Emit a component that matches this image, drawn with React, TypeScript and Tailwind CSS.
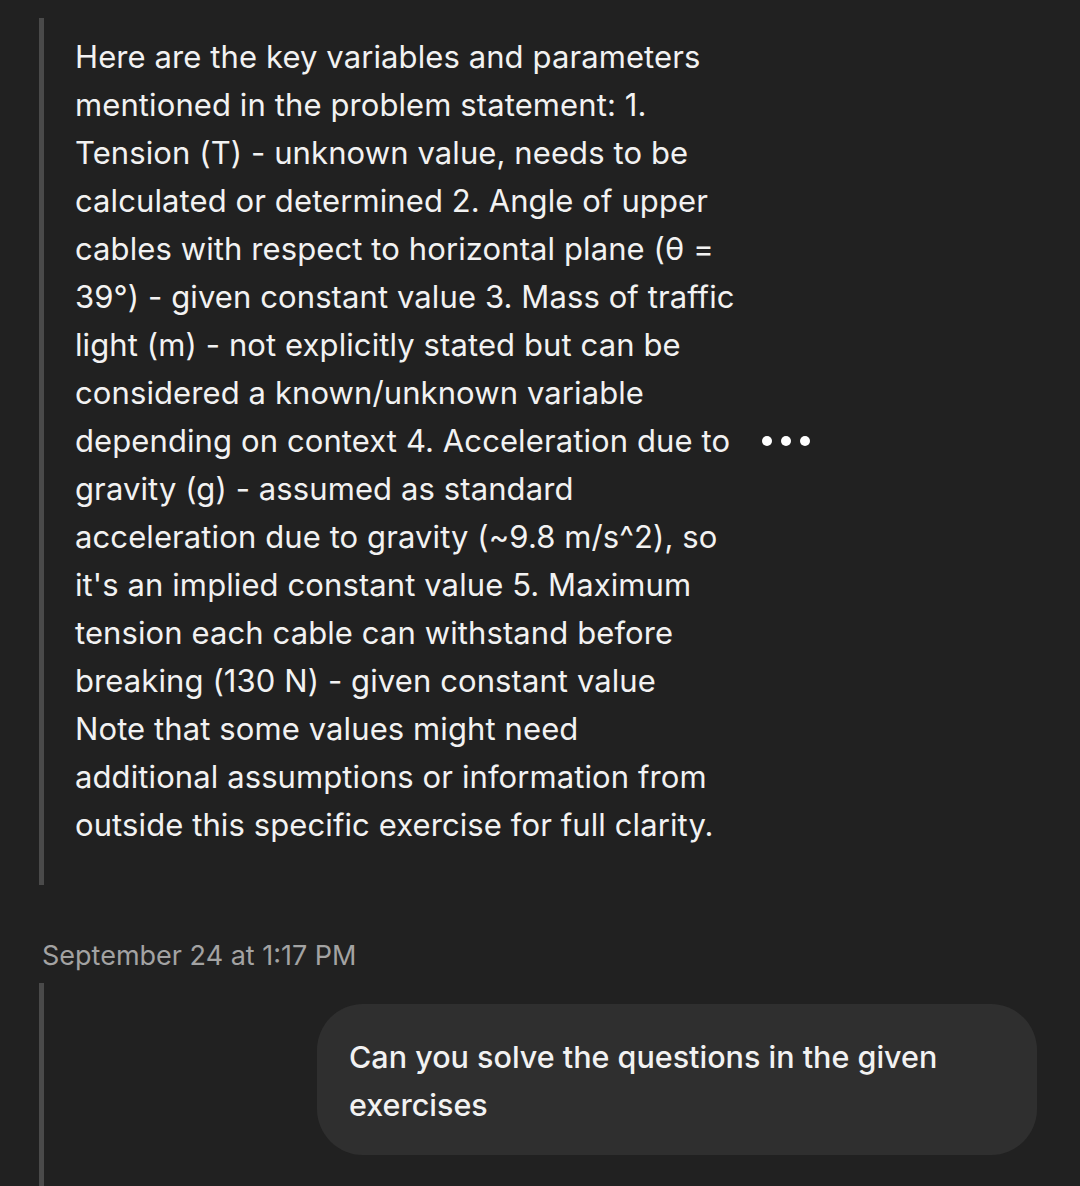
import { ReactNode } from 'react';

const lines = [
  'Here are the key variables and parameters',
  'mentioned in the problem statement: 1.',
  'Tension (T) - unknown value, needs to be',
  'calculated or determined 2. Angle of upper',
  'cables with respect to horizontal plane (θ =',
  '39°) - given constant value 3. Mass of traffic',
  'light (m) - not explicitly stated but can be',
  'considered a known/unknown variable',
  'depending on context 4. Acceleration due to',
  'gravity (g) - assumed as standard',
  'acceleration due to gravity (~9.8 m/s^2), so',
  "it's an implied constant value 5. Maximum",
  'tension each cable can withstand before',
  'breaking (130 N) - given constant value',
  'Note that some values might need',
  'additional assumptions or information from',
  'outside this specific exercise for full clarity.',
];

function Line({ children }: { children: ReactNode }) {
  return <div className="h-[48px] leading-[48px] whitespace-nowrap">{children}</div>;
}

export default function App() {
  return (
    <div
      className="w-[1080px] h-[1186px] overflow-hidden bg-[#212121] text-[#f2f2f2]"
      style={{ fontFamily: 'Inter, "Noto Sans", sans-serif' }}
    >
      <div className="pt-[18px] pl-[39px]">
        {/* Bot message */}
        <div className="flex items-center">
          <div className="border-l-[5px] border-[#4a4a4a] pl-[31px] pt-[15px] pb-[36px] w-[718px] text-[31px] tracking-[0.1px]">
            {lines.map((l, i) => (
              <Line key={i}>{l}</Line>
            ))}
          </div>
          <div className="flex gap-[9px] ml-[5px] mt-[-22px]">
            <span className="w-[10px] h-[10px] rounded-full bg-white" />
            <span className="w-[10px] h-[10px] rounded-full bg-white" />
            <span className="w-[10px] h-[10px] rounded-full bg-white" />
          </div>
        </div>

        {/* Timestamp */}
        <div className="mt-[53px] pl-[3px] text-[27px] leading-[36px] text-[#a3a3a3]">
          September 24 at 1:17 PM
        </div>

        {/* User message */}
        <div className="mt-[9px] border-l-[5px] border-[#4a4a4a] h-[240px] pt-[21px] flex justify-end pr-[43px]">
          <div className="w-[720px] h-[151px] rounded-[46px] bg-[#2f2f2f] pl-[32px] pt-[29px] text-[30.5px] font-medium">
            <Line>Can you solve the questions in the given</Line>
            <Line>exercises</Line>
          </div>
        </div>
      </div>
    </div>
  );
}
